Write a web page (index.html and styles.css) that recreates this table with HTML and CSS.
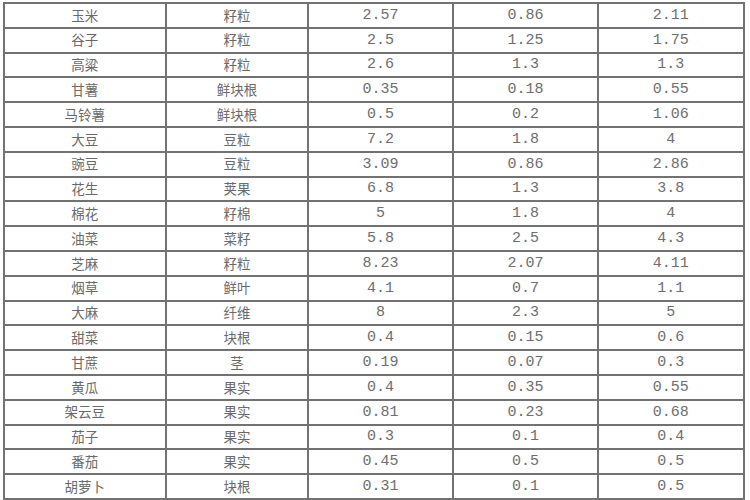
FILE: index.html
```html
<!DOCTYPE html>
<html lang="zh">
<head>
<meta charset="utf-8">
<title>作物养分吸收量</title>
<link rel="stylesheet" href="styles.css">
</head>
<body>
<table class="crop-table">
  <colgroup>
    <col class="c1"><col class="c2"><col class="c3"><col class="c4"><col class="c5">
  </colgroup>
  <tbody>
    <tr><td>玉米</td><td>籽粒</td><td class="num">2.57</td><td class="num">0.86</td><td class="num">2.11</td></tr>
    <tr><td>谷子</td><td>籽粒</td><td class="num">2.5</td><td class="num">1.25</td><td class="num">1.75</td></tr>
    <tr><td>高粱</td><td>籽粒</td><td class="num">2.6</td><td class="num">1.3</td><td class="num">1.3</td></tr>
    <tr><td>甘薯</td><td>鲜块根</td><td class="num">0.35</td><td class="num">0.18</td><td class="num">0.55</td></tr>
    <tr><td>马铃薯</td><td>鲜块根</td><td class="num">0.5</td><td class="num">0.2</td><td class="num">1.06</td></tr>
    <tr><td>大豆</td><td>豆粒</td><td class="num">7.2</td><td class="num">1.8</td><td class="num">4</td></tr>
    <tr><td>豌豆</td><td>豆粒</td><td class="num">3.09</td><td class="num">0.86</td><td class="num">2.86</td></tr>
    <tr><td>花生</td><td>荚果</td><td class="num">6.8</td><td class="num">1.3</td><td class="num">3.8</td></tr>
    <tr><td>棉花</td><td>籽棉</td><td class="num">5</td><td class="num">1.8</td><td class="num">4</td></tr>
    <tr><td>油菜</td><td>菜籽</td><td class="num">5.8</td><td class="num">2.5</td><td class="num">4.3</td></tr>
    <tr><td>芝麻</td><td>籽粒</td><td class="num">8.23</td><td class="num">2.07</td><td class="num">4.11</td></tr>
    <tr><td>烟草</td><td>鲜叶</td><td class="num">4.1</td><td class="num">0.7</td><td class="num">1.1</td></tr>
    <tr><td>大麻</td><td>纤维</td><td class="num">8</td><td class="num">2.3</td><td class="num">5</td></tr>
    <tr><td>甜菜</td><td>块根</td><td class="num">0.4</td><td class="num">0.15</td><td class="num">0.6</td></tr>
    <tr><td>甘蔗</td><td>茎</td><td class="num">0.19</td><td class="num">0.07</td><td class="num">0.3</td></tr>
    <tr><td>黄瓜</td><td>果实</td><td class="num">0.4</td><td class="num">0.35</td><td class="num">0.55</td></tr>
    <tr><td>架云豆</td><td>果实</td><td class="num">0.81</td><td class="num">0.23</td><td class="num">0.68</td></tr>
    <tr><td>茄子</td><td>果实</td><td class="num">0.3</td><td class="num">0.1</td><td class="num">0.4</td></tr>
    <tr><td>番茄</td><td>果实</td><td class="num">0.45</td><td class="num">0.5</td><td class="num">0.5</td></tr>
    <tr><td>胡萝卜</td><td>块根</td><td class="num">0.31</td><td class="num">0.1</td><td class="num">0.5</td></tr>
  </tbody>
</table>
</body>
</html>
```

FILE: styles.css
```css
html, body {
  margin: 0;
  padding: 0;
  background: #ffffff;
}

body {
  padding: 2px 0 0 2.5px;
  overflow: hidden;
}

.crop-table {
  border-collapse: collapse;
  table-layout: fixed;
  width: 740px;
  font-family: "Noto Sans CJK SC", "Liberation Serif", serif;
  font-size: 13.5px;
  color: #6a6a6a;
}

.c1 { width: 162.5px; }
.c2 { width: 142px; }
.c3 { width: 145px; }
.c4 { width: 145px; }
.c5 { width: 145.5px; }

.crop-table tr {
  height: 24.8px;
}

.crop-table td {
  border: 2px solid #727272;
  padding: 0;
  text-align: center;
  vertical-align: middle;
  line-height: 1;
  white-space: nowrap;
}

.crop-table td.num {
  font-family: "Liberation Mono", "DejaVu Sans Mono", monospace;
  font-size: 15px;
  color: #6e6e6e;
}
```
